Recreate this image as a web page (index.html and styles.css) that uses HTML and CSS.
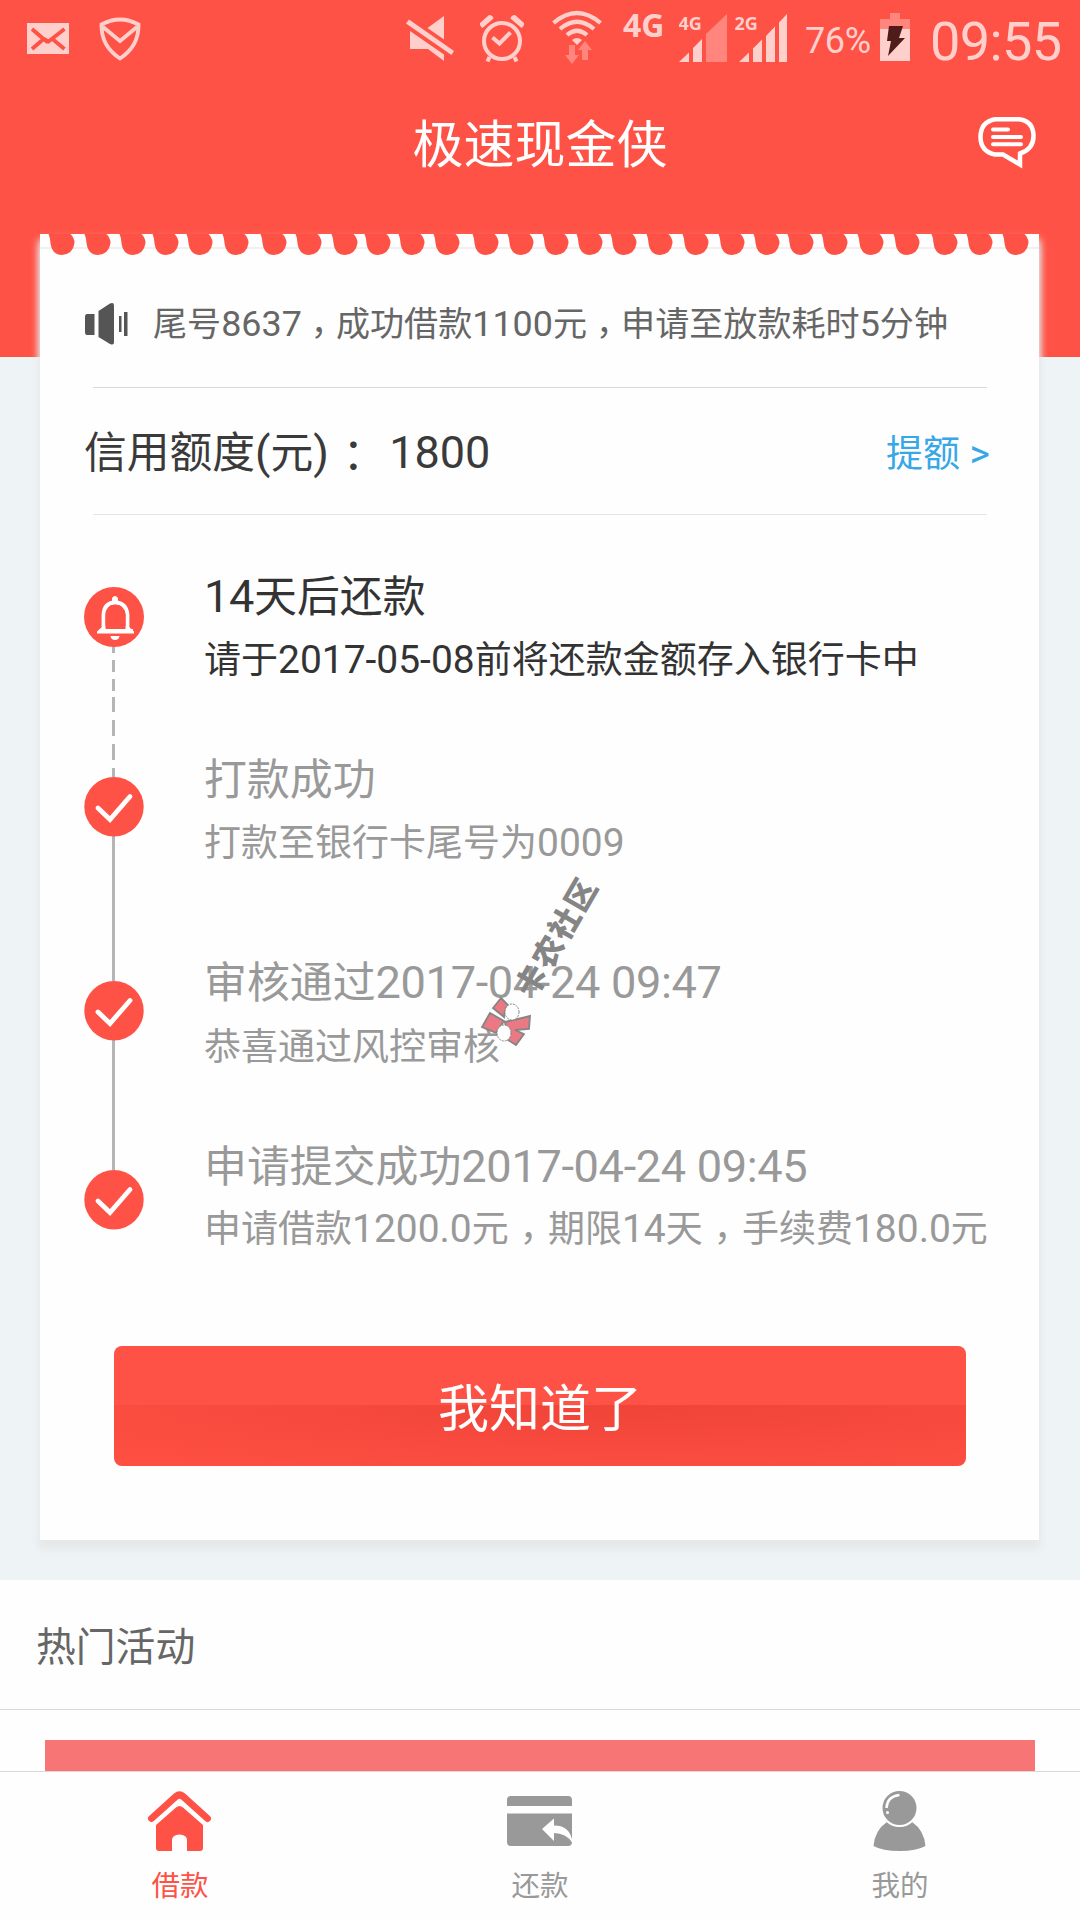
FILE: index.html
```html
<!DOCTYPE html>
<html lang="zh-CN">
<head>
<meta charset="utf-8">
<title>极速现金侠</title>
<link rel="stylesheet" href="styles.css">
</head>
<body>
<header class="header">
  <div class="status">
    <svg class="mail" width="42" height="72" viewBox="27 0 42 72"><path fill="#ffcfcc" d="M27 23h42v31H27z"/><path d="M32 29l11 9.500M32 49l11-9.500M64.500 29l-16 12.500L43 38.500M64.500 49L53 39.500M43 38.500l5 4" fill="none" stroke="#ff5246" stroke-width="3.800"/></svg>
    <svg class="shield" width="42" height="72" viewBox="99 0 42 72"><path d="M101.500 24.500Q120 14.500 138.500 24.500Q139 46 120 58.500Q101 46 101.500 24.500ZM103 27L120 41L137 27" fill="none" stroke="#ffcfcc" stroke-width="3.800"/></svg>
    <svg class="mute" width="48" height="72" viewBox="406 0 48 72"><path fill="#ffcfcc" d="M444 16v23.500L427.500 28zM410 31l34 23.500V61L428 49h-18zM409 19.500l45 31.500-2.500 4L406 23.500z"/></svg>
    <svg class="alarm" width="44" height="72" viewBox="480 0 44 72"><g fill="none" stroke="#ffcfcc"><circle cx="502" cy="41" r="18" stroke-width="4"/><path d="M492.500 37.500l7 6 11-11" stroke-width="4"/><path d="M489.500 57l-2 4.500M514.500 57l2 4.500" stroke-width="4"/></g><path fill="#ffcfcc" d="M480 23l9-8q4 0 4.500 3.500L482.500 28q-3-2-2.500-5zM524 23l-9-8q-4 0-4.500 3.500L521.500 28q3-2 2.500-5z"/></svg>
    <svg class="wifi" width="50" height="72" viewBox="552 0 50 72"><g fill="none" stroke="#ffcfcc" stroke-width="4.200"><path d="M553.500 23Q577 3 600.500 23"/><path d="M560 29Q577 14.500 594 29"/><path d="M567 35Q577 26.500 587 35"/></g><path fill="#ffcfcc" d="M572 40q5-4 10 0l-5 5z"/><path fill="#ff857d" d="M569 45h6v10h4l-7 9-7-9h4zM582 60V50h-4l7-9 7 9h-4v10z"/></svg>
    <span class="net">4G</span>
    <svg class="sig1" width="48" height="72" viewBox="679 0 48 72"><path fill="#ff857d" d="M706 34l21-20v48h-21z"/><path fill="#ffcfcc" d="M679 62l10-9.500V62zM693 48l9-9v23h-9z"/><text class="tiny" x="678.500" y="29.500">4G</text></svg>
    <svg class="sig2" width="52" height="72" viewBox="735 0 52 72"><path fill="#ffcfcc" d="M739 62l10-9.500V62zM753 48.500l9-9V62h-9zM766 36l9-9.500V62h-9zM779 22.500l8-8.500v48h-8z"/><text class="tiny" x="734.500" y="30">2G</text></svg>
    <span class="percent">76%</span>
    <svg class="battery" width="30" height="72" viewBox="880 0 30 72"><path fill="#ff857d" d="M890 13h10v6h10v10h-30V19h10z"/><path fill="#ffcfcc" d="M880 29h30v32h-30z"/><path fill="#4f1c1b" d="M889 26h14l-4 12h6l-17 18 3-15h-4z"/></svg>
    <span class="clock">09:55</span>
  </div>
  <div class="titlebar">
    <h1>极速现金侠</h1>
    <svg class="chat" width="58" height="52" viewBox="0 0 58 52"><path d="M17 2.200H41Q55.500 4 55.500 19Q55.500 32 42 36.500V47.500L25 37.500H17Q2.500 34.500 2.500 20Q2.500 5 17 2.200Z" fill="none" stroke="#fff" stroke-width="4.500"/><path d="M15 12.500h15M15 20h28M15 27.300h28" stroke="#fff" stroke-width="4" stroke-linecap="round"/></svg>
  </div>
</header>

<main class="card">
  <svg class="teeth" width="999" height="22" viewBox="40 234 999 22"><defs><path id="hole" d="M-13.500 0Q-12 3-11.500 9Q-10 21 0 21Q11 20 12.500 9Q12.500 4 8.500 0Z"/></defs>
    <path d="M40 248h999" stroke="#f0f0f0" stroke-width="2"/>
    <g fill="#ff5246"><use href="#hole" x="62" y="234"/><use href="#hole" x="98" y="234"/><use href="#hole" x="133" y="234"/><use href="#hole" x="166" y="234"/><use href="#hole" x="200" y="234"/><use href="#hole" x="236" y="234"/><use href="#hole" x="274" y="234"/><use href="#hole" x="309" y="234"/><use href="#hole" x="345" y="234"/><use href="#hole" x="378" y="234"/><use href="#hole" x="412" y="234"/><use href="#hole" x="447" y="234"/><use href="#hole" x="486" y="234"/><use href="#hole" x="521" y="234"/><use href="#hole" x="556" y="234"/><use href="#hole" x="590" y="234"/><use href="#hole" x="624" y="234"/><use href="#hole" x="660" y="234"/><use href="#hole" x="696" y="234"/><use href="#hole" x="732" y="234"/><use href="#hole" x="767" y="234"/><use href="#hole" x="801" y="234"/><use href="#hole" x="835" y="234"/><use href="#hole" x="871" y="234"/><use href="#hole" x="907" y="234"/><use href="#hole" x="945" y="234"/><use href="#hole" x="980" y="234"/><use href="#hole" x="1016" y="234"/></g>
  </svg>
  <section class="notice">
    <svg width="44" height="44" viewBox="0 0 44 44"><path fill="#555" d="M2 12h7.500v21H2q-2 0-2-3V15q0-3 2-3zM13.500 9L25 1.500q4-1.500 4 2v37q0 3-4 1.500L13.500 35zM34 14h2.500v16H34zM39 10h3.500v24H39z"/></svg>
    <p>尾号<b>8637</b><i lang="zh-TW">，</i>成功借款<b>1100</b>元<i lang="zh-TW">，</i>申请至放款耗时<b>5</b>分钟</p>
  </section>
  <section class="credit">
    <p>信用额度<b>(</b>元<b>)</b><i lang="zh-TW">：</i><b> 1800</b></p>
    <a class="raise">提额<b> &gt;</b></a>
  </section>
  <ol class="steps">
    <li class="step current">
      <svg width="60" height="190" viewBox="0 0 60 190"><path d="M29.500 59v7M29.500 73v12M29.500 92v12M29.500 110v15M29.500 133v16M29.500 157v16M29.500 181v9" stroke="#b5b5b5" stroke-width="3"/><circle cx="30" cy="30" r="30" fill="#ff5246"/><path d="M19.500 43V28Q20 16 31 15.500Q42.500 16 43.500 28V43M15 44h34" fill="none" stroke="#fff" stroke-width="3.800"/><path fill="#fff" d="M19 39l-6 5.500v2h37v-2L44 39zM28 14v-3q3-4 6 0v3zM26.500 49h9q-.5 4-4.500 4t-4.500-4z"/><path fill="#ff5246" d="M21.500 28Q22 18 31 17.500Q41 18 41.500 28V42h-20z"/></svg>
      <div><h2><b>14</b>天后还款</h2><p>请于<b>2017-05-08</b>前将还款金额存入银行卡中</p></div>
    </li>
    <li class="step paid">
      <svg width="60" height="204" viewBox="0 0 60 204"><path d="M29.500 58v146" stroke="#b5b5b5" stroke-width="3"/><circle cx="30" cy="29.700" r="29.700" fill="#ff5246"/><path d="M14 31l12 11.500L46 19.500" fill="none" stroke="#fff" stroke-width="4.800" stroke-linecap="round"/></svg>
      <div><h2>打款成功</h2><p>打款至银行卡尾号为<b>0009</b></p></div>
    </li>
    <li class="step approved">
      <svg width="60" height="189" viewBox="0 0 60 189"><path d="M29.500 58v131" stroke="#b5b5b5" stroke-width="3"/><circle cx="30" cy="29.700" r="29.700" fill="#ff5246"/><path d="M14 31l12 11.500L46 19.500" fill="none" stroke="#fff" stroke-width="4.800" stroke-linecap="round"/></svg>
      <div><h2>审核通过<b>2017-04-24 09:47</b></h2><p>恭喜通过风控审核</p></div>
    </li>
    <li class="step submitted">
      <svg width="60" height="60" viewBox="0 0 60 60"><circle cx="30" cy="29.700" r="29.700" fill="#ff5246"/><path d="M14 31l12 11.500L46 19.500" fill="none" stroke="#fff" stroke-width="4.800" stroke-linecap="round"/></svg>
      <div><h2>申请提交成功<b>2017-04-24 09:45</b></h2><p>申请借款<b>1200.0</b>元<i lang="zh-TW">，</i>期限<b>14</b>天<i lang="zh-TW">，</i>手续费<b>180.0</b>元</p></div>
    </li>
  </ol>
  <button class="confirm">我知道了</button>
</main>

<section class="events">
  <h3>热门活动</h3>
  <div class="banner"></div>
</section>

<nav class="tabs">
  <a class="tab active">
    <svg width="66" height="64" viewBox="147 1789 66 64"><path d="M151.500 1818.500L176 1796.500Q179.500 1793.500 183 1796.500L207.500 1818.500" fill="none" stroke="#ff5246" stroke-width="7" stroke-linecap="round"/><path fill="#ff5246" d="M156 1825l20-17.500q3.500-3 7 0l20 17.500v23q0 3-3 3h-13v-11q0-5-7.500-5.500q-7.500.5-7.500 5.500v11h-13q-3 0-3-3z"/></svg>
    <span>借款</span>
  </a>
  <a class="tab">
    <svg width="66" height="64" viewBox="507 1789 66 64"><path fill="#999" d="M507 1806v-6q0-4 4-4h57q4 0 4 4v6zM507 1813.500h65V1842q0 4-4 4h-57q-4 0-4-4z"/><path fill="#fff" d="M542 1829l12-10.500v7q17 0 18.500 17.500q-6.500-10-18.500-10v8z"/></svg>
    <span>还款</span>
  </a>
  <a class="tab">
    <svg width="66" height="64" viewBox="867 1789 66 64"><path fill="#999" d="M887 1822q12.500 9 25 0q12 8 13.500 24q-9 5-26 5t-26-5q1.500-16 13.500-24z"/><circle cx="899.500" cy="1808" r="18" fill="#999" stroke="#fff" stroke-width="2"/><path d="M886.500 1808Q887 1796.500 899.500 1795" fill="none" stroke="#fff" stroke-width="2.500"/><circle cx="887.500" cy="1812.500" r="1.500" fill="#fff"/></svg>
    <span>我的</span>
  </a>
</nav>

<svg class="watermark" width="130" height="180" viewBox="475 870 130 180"><text transform="translate(557 937) rotate(-60)" text-anchor="middle" y="11">卡农社区</text><g fill="#ea7983" stroke="#858585" stroke-width="1.800"><path d="M501 998l7 7q-4 6-4 12l-11-9zM490 1013l14 8-8 12-14-6zM505 1022l25-6-1 13-14 1 9 4-8 11-8-5z"/></g><g fill="#fff" stroke="#858585" stroke-width="1" stroke-dasharray="2 1"><ellipse cx="512" cy="1012" rx="7" ry="8"/><ellipse cx="504" cy="1033" rx="7" ry="8"/></g></svg>
</body>
</html>
```
FILE: styles.css
```css
* { box-sizing: border-box; }
body {
  position: relative;
  display: flex;
  flex-direction: column;
  margin: 0;
  width: 1080px;
  height: 1920px;
  overflow: hidden;
  background: #eef3f6;
  font-family: Roboto, "Noto Sans CJK SC", sans-serif;
  -webkit-font-smoothing: antialiased;
}
h1, h2, h3, p, ol { margin: 0; padding: 0; font-weight: 400; list-style: none; }
svg { display: block; flex: none; }
p, h2 { white-space: pre; }
/* Latin runs are set slightly larger than the Chinese text around them */
b { font-size: 1.053em; font-weight: 400; white-space: pre; }
/* full-width punctuation, centred in its box and lowered to the baseline */
i { display: inline-block; width: 1em; font-family: "Noto Sans CJK TC", sans-serif; font-style: normal; line-height: 1; text-align: center; vertical-align: -.28em; }

.header { flex: none; height: 357px; background: #ff5246; color: #fff; }
.status { display: flex; height: 72px; padding-left: 27px; color: #ffcfcc; line-height: 1; }
.shield { margin-left: 30px; }
.mute { margin-left: 265px; }
.alarm { margin-left: 26px; }
.wifi { margin-left: 28px; }
.net { width: 40px; margin: 9px 0 0 21px; font: 700 32px/31px "Open Sans", sans-serif; }
.tiny { font: 700 18px "Open Sans", sans-serif; fill: #ffcfcc; }
.sig1 { margin-left: 16px; }
.sig2 { margin-left: 8px; }
.percent { width: 66px; margin: 23px 0 0 18px; font-size: 36px; letter-spacing: -.4px; }
.battery { margin-left: 9px; }
.clock { margin: 15px 0 0 20px; font-size: 54px; letter-spacing: -.6px; }
.titlebar { position: relative; display: flex; align-items: center; justify-content: center; height: 144px; padding-bottom: 7px; }
.titlebar h1 { font-size: 51px; }
.chat { position: absolute; right: 44px; top: 45px; }

.card {
  flex: none;
  display: flex;
  flex-direction: column;
  width: 999px;
  height: 1306px;
  margin: -123px 0 0 40px;
  background: #fefefe;
  box-shadow: 0 10px 9px -1px #e5e9ea, 0 6px 7px 1px #e8e9ea;
}
.notice { display: flex; align-items: center; height: 132px; margin: 0 52px 0 53px; border-bottom: 1px solid #d9d9d9; color: #666; }
.notice svg { margin: 5px 24px 0 -8px; }
.notice p { padding-top: 4px; font-size: 34.100px; line-height: 50px; }
.credit { display: flex; align-items: center; justify-content: space-between; height: 127px; margin: 0 52px 0 53px; border-bottom: 1px solid #e5e5e5; color: #3a3a3a; }
.credit p { margin-left: -9px; padding-top: 3px; font-size: 42.750px; line-height: 62px; }
.credit i { width: 1.15em; vertical-align: -.1em; }
.raise { margin-right: -3px; padding-bottom: 1px; font-size: 37px; color: #37a7e8; white-space: pre; }

.steps { margin: 36px 0 0 44px; }
.step { display: flex; gap: 60px; color: #999; }
.step svg { margin-top: 36px; }
.step h2 { font-size: 42.900px; line-height: 60px; }
.step h2 b { letter-spacing: -.35px; }
.step p { font-size: 37px; line-height: 66px; }
.step i { width: 1.06em; }
.current { height: 190px; color: #333; }
.paid { height: 204px; }
.approved { height: 189px; }
.submitted { height: 140px; }
.current div { padding-top: 16px; }
.paid div { padding-top: 9px; }
.approved div { padding-top: 8px; }
.approved p { line-height: 69px; }
.submitted div { padding-top: 3px; }
.submitted p { line-height: 65px; }

.confirm {
  width: 852px;
  height: 120px;
  margin: 72px 0 0 74px;
  padding: 0 0 3px;
  border: 0;
  border-radius: 8px;
  background: linear-gradient(#ff5246, #ff5246) top / 100% 59px no-repeat,
    radial-gradient(ellipse 85% 80px at 60% 59px, #f04438, #ff4f43) #ff5246;
  color: #fff;
  font: 400 51px "Noto Sans CJK SC", sans-serif;
}

.events { flex: none; height: 191px; margin-top: 40px; background: #fefefe; color: #666; }
.events h3 { height: 130px; padding-left: 36px; border-bottom: 1px solid #d9d9d9; font-size: 39.800px; line-height: 135px; }
.banner { height: 31px; margin: 30px 45px 0; background: #f87575; }

.tabs { flex: none; display: flex; height: 149px; border-top: 1px solid #d9d9d9; background: #fefefe; }
.tab { display: flex; flex: 1; flex-direction: column; align-items: center; padding-top: 17px; color: #999; font-size: 28.500px; line-height: 40px; }
.tab span { margin-top: 14px; }
.active { color: #ff5246; }

.watermark { position: absolute; left: 475px; top: 870px; overflow: visible; }
.watermark text { font: 900 31px "Noto Sans CJK SC", sans-serif; fill: #858585; letter-spacing: 2px; }
```
